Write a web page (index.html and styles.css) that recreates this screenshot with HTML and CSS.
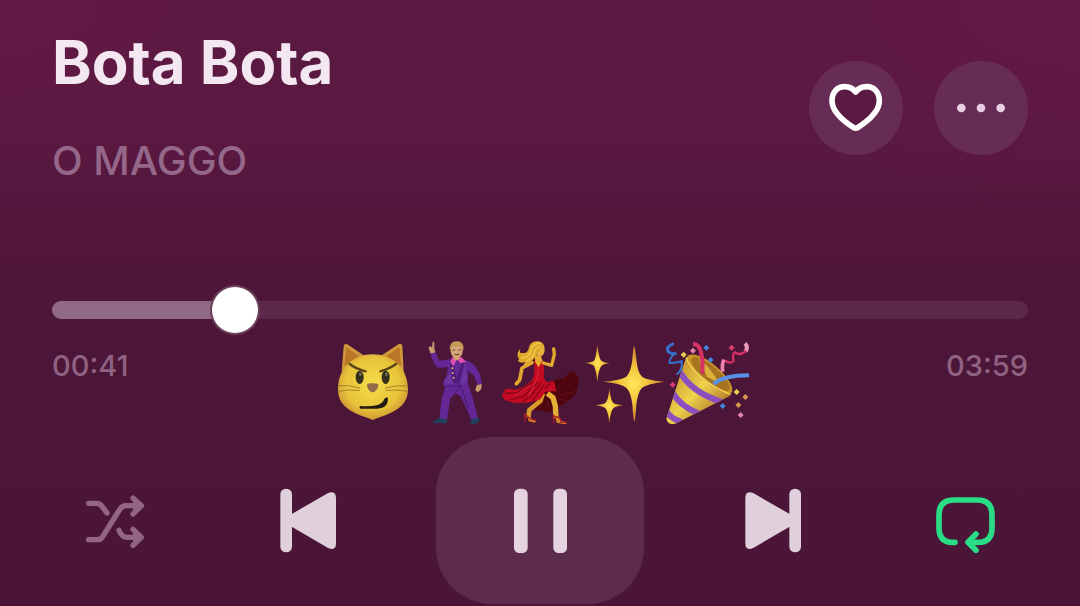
FILE: index.html
```html
<!DOCTYPE html>
<html lang="en">
<head>
  <meta charset="UTF-8">
  <meta name="viewport" content="width=device-width, initial-scale=1">
  <title>Bota Bota - O MAGGO</title>
  <link rel="stylesheet" href="styles.css">
</head>
<body>
<main class="player">
  <header class="track-header">
    <div class="track-info">
      <h1 class="track-title">Bota Bota</h1>
      <p class="track-artist">O MAGGO</p>
    </div>
    <div class="track-actions">
      <button type="button" class="round-button" aria-label="Like">
        <svg width="60" height="54" viewBox="108 123 180 162">
          <path class="heart" d="M197 156Q184 140 164 140C141 140 126 157 126 182C126 214 156 240 190 262Q197 267 204 262C238 240 268 214 268 182C268 157 253 140 230 140Q210 140 197 156z"/>
        </svg>
      </button>
      <button type="button" class="round-button" aria-label="More">
        <svg width="60" height="54" viewBox="482 123 180 162" fill="#e8cfe4">
          <circle cx="513" cy="204" r="13"/>
          <circle cx="572" cy="204" r="13"/>
          <circle cx="631" cy="204" r="13"/>
        </svg>
      </button>
    </div>
  </header>

  <input type="range" class="seek" id="seek" min="0" max="239" value="41" aria-label="Seek" style="--played: 0.1715">

  <div class="time-row">
    <span class="time">00:41</span>

    <div class="emojis">
      <!-- smirking cat -->
      <svg class="emoji" viewBox="0 27 252 264" role="img" aria-label="Smirking cat">
        <defs>
          <radialGradient id="catFace" cx="50%" cy="45%" r="60%">
            <stop offset="0" stop-color="#f5dc48"/>
            <stop offset="0.65" stop-color="#e8c43a"/>
            <stop offset="1" stop-color="#c98a34"/>
          </radialGradient>
        </defs>
        <path fill="#d0983a" d="M35 125L41 49Q43 38 54 44L104 78zM221 125L217 48Q214 37 203 44L152 78z"/>
        <path fill="#b97626" d="M43 108L49 52L92 82zM213 108L208 52L164 82z"/>
        <path fill="url(#catFace)" d="M128 73C73 73 24 110 24 180C24 219 53 241 90 256Q111 263 128 270Q145 263 166 256C205 241 234 219 234 180C234 110 184 73 128 73z"/>
        <g fill="none" stroke="#a5842c" stroke-width="3" stroke-linecap="round">
          <path d="M26 167Q55 164 90 174M25 184Q55 177 89 181M166 174Q200 164 231 168M167 181Q200 177 232 184"/>
        </g>
        <ellipse cx="89" cy="142" rx="12" ry="20" fill="#342f1c"/>
        <ellipse cx="167" cy="142" rx="12" ry="20" fill="#342f1c"/>
        <ellipse cx="91" cy="133" rx="4" ry="6" fill="#716e58"/>
        <ellipse cx="169" cy="133" rx="4" ry="6" fill="#716e58"/>
        <path fill="none" stroke="#594515" stroke-width="7" stroke-linecap="round" d="M59 102Q76 116 107 124M198 102Q180 116 151 124"/>
        <path fill="#946b4c" d="M111 167Q110 160 122 160H132Q146 160 145 167C144 178 133 187 128 187S112 178 111 167z"/>
        <path fill="#241a10" d="M90 228Q121 230 140 226Q159 220 163 207Q168 201 173 202Q177 235 142 236H91Q86 232 90 228z"/>
      </svg>

      <!-- man dancing -->
      <svg class="emoji" viewBox="252 27 252 264" role="img" aria-label="Man dancing">
        <path fill="#c79a6e" d="M301 70L296 55L299 48L306 52L308 36Q311 32 313 37V56L316 65L313 73z"/>
        <path fill="#632796" d="M301 72L316 67L328 93L361 87L380 92L402 89Q422 93 435 107L451 136L456 163L443 166L432 137L415 122L414 163L424 190L445 268L426 272L392 199L376 190L360 207L351 271L327 270L335 204L345 176L339 158L350 137L354 112L322 113Q310 100 301 72z"/>
        <path fill="#4d1c7b" d="M365 93L380 145L398 91L407 96L389 162L364 156L354 108z"/>
        <path fill="#6d34a0" d="M356 94L369 158L352 165L342 156L354 132zM406 94L412 155L389 162L400 116z"/>
        <path fill="none" stroke="#451b70" stroke-width="3" d="M376 190L391 164L416 238M345 169L391 167M414 118V157M354 111V135"/>
        <path fill="#df4fb0" d="M366 82H395L408 96L392 100L381 88L370 109L361 97z"/>
        <path fill="#ce9e70" d="M370 80H390L385 91H374z"/>
        <ellipse cx="380" cy="62" rx="18" ry="23" fill="#d5a477"/>
        <path fill="#c39b56" d="M360 63Q356 34 380 34Q404 34 400 63L394 49Q379 52 366 49z"/>
        <path fill="none" stroke="#5b3526" stroke-width="3" stroke-linecap="round" d="M370 60H374M387 60H391M375 73Q381 77 387 73"/>
        <g fill="#e1b56a">
          <circle cx="367" cy="115" r="3"/>
          <circle cx="368" cy="129" r="3"/>
          <circle cx="371" cy="143" r="3"/>
        </g>
        <path fill="#c79a6e" d="M440 166L455 162L454 177L444 187L436 181z"/>
        <path fill="#243f5d" d="M328 264L352 268L350 280H308Q307 275 328 264zM424 269L445 262L449 274L438 281L422 282z"/>
      </svg>

      <!-- woman dancing -->
      <svg class="emoji" viewBox="54 27 252 264" role="img" aria-label="Woman dancing">
        <path fill="#4d050e" d="M192 177L222 151L253 144L269 123L284 127L295 143L296 160L288 190L268 211L240 228L213 246L187 244L164 240L160 213z"/>
        <path fill="none" stroke="#71101a" stroke-width="2" d="M221 188L270 126M229 191L291 147M232 196L289 184M232 207L266 213M190 210L176 243M203 208L205 244"/>
        <path fill="none" stroke="#d89a28" stroke-width="14" stroke-linejoin="round" d="M189 190L181 213L148 240L145 263"/>
        <path fill="none" stroke="#e5ae36" stroke-width="16" stroke-linejoin="round" d="M202 190L219 203L226 228L228 264"/>
        <path fill="#c40b22" d="M163 91L173 94L187 91L193 114L191 140L198 157L222 153L229 184L196 185L181 208L164 214L134 219L105 219L74 210L65 196L78 176L108 179L135 169L157 150L163 129z"/>
        <path fill="none" stroke="#850717" stroke-width="4" d="M160 156L111 188L73 190M171 158L133 198L92 209M182 159L154 197L126 217M192 164L175 189L156 215M211 159L194 176"/>
        <path fill="none" stroke="#e23a43" stroke-width="2" d="M151 165L104 198M176 118L168 153L145 200"/>
        <path fill="none" stroke="#e3a82e" stroke-width="11" stroke-linecap="round" stroke-linejoin="round" d="M156 98L126 114L119 150L109 161"/>
        <path fill="none" stroke="#e3a82e" stroke-width="10" stroke-linecap="round" stroke-linejoin="round" d="M190 99L215 106L223 73L221 57"/>
        <path fill="#e7ad31" d="M164 79L182 76L187 91L176 112L166 97z"/>
        <ellipse cx="180" cy="60" rx="14" ry="19" fill="#e5b13c"/>
        <path fill="#dfaa2c" d="M194 50Q187 32 168 34Q149 35 145 59Q140 73 120 68Q118 62 121 57Q109 67 114 82Q120 89 113 93Q124 101 136 96L129 108Q148 105 156 92Q164 82 174 79L168 72Q182 65 180 53z"/>
        <path fill="none" stroke="#f0c953" stroke-width="4" d="M181 40Q158 38 153 62Q148 83 123 84M182 50Q164 52 163 70Q157 87 139 93"/>
        <path fill="#d58b25" d="M144 254L153 265L169 272L164 278L145 273zM225 256L238 264L244 272L261 278L256 283L230 278z"/>
        <path fill="none" stroke="#b01c27" stroke-width="4" d="M134 250L135 276M135 253L151 267L168 272M220 254L222 280M221 258L240 264L243 277H261"/>
      </svg>

      <!-- sparkles -->
      <svg class="emoji" viewBox="-9 27 252 264" role="img" aria-label="Sparkles">
        <defs>
          <radialGradient id="spark">
            <stop offset="0" stop-color="#ffe75a"/>
            <stop offset="0.45" stop-color="#f4c43c"/>
            <stop offset="1" stop-color="#c5772e"/>
          </radialGradient>
        </defs>
        <g fill="url(#spark)">
          <path d="M147 48Q150 48 154 88Q158 130 171 140Q187 151 239 155Q187 161 171 173Q158 187 154 224Q151 272 148 275Q145 272 142 224Q138 187 124 173Q108 160 53 155Q108 151 124 140Q138 127 142 88Q145 48 147 48z"/>
          <path d="M37 44Q42 87 49 92Q55 97 75 99Q55 102 49 108Q41 117 37 156Q33 117 27 108Q22 102 1 99Q22 96 27 92Q33 86 37 44z"/>
          <path d="M73 177Q78 214 85 219Q91 223 115 226Q91 229 85 235Q77 242 73 280Q69 242 61 235Q55 229 30 226Q55 223 61 219Q69 213 73 177z"/>
        </g>
      </svg>

      <!-- party popper -->
      <svg class="emoji" viewBox="243 27 252 264" role="img" aria-label="Party popper">
        <defs>
          <linearGradient id="cone" x1="0" y1="0" x2="1" y2="1">
            <stop offset="0.15" stop-color="#c6952c"/>
            <stop offset="0.5" stop-color="#eed24c"/>
            <stop offset="0.85" stop-color="#a96e25"/>
          </linearGradient>
          <clipPath id="coneShape">
            <path d="M303 82C310 112 360 164 436 197L271 281Q248 287 244 266z"/>
          </clipPath>
        </defs>
        <ellipse cx="373" cy="134" rx="86" ry="32" transform="rotate(40 373 134)" fill="#c99528"/>
        <ellipse cx="377" cy="132" rx="73" ry="23" transform="rotate(40 377 132)" fill="#a77420"/>
        <path fill="#d9b13a" d="M340 85Q370 105 402 158L366 140z"/>
        <path fill="url(#cone)" d="M303 82C310 112 360 164 436 197L271 281Q248 287 244 266z"/>
        <g clip-path="url(#coneShape)" fill="none" stroke="#8c4fc0" stroke-width="18">
          <path d="M283 123Q318 187 413 217M262 187Q286 230 344 252M241 238Q254 265 290 276"/>
        </g>
        <path fill="none" stroke="#f3d75a" stroke-width="4" d="M304 82C310 110 360 162 437 194"/>
        <path fill="none" stroke="#d63263" stroke-width="12" d="M324 42Q343 42 348 67Q355 93 352 132"/>
        <path fill="none" stroke="#5691e7" stroke-width="12" d="M386 162Q417 136 492 136"/>
        <g fill="none" stroke="#3972ce" stroke-linecap="round">
          <path stroke-width="9" d="M263 42Q241 52 250 65Q262 73 271 71"/>
          <path stroke-width="6" d="M271 71Q256 78 253 98Q263 102 290 94Q294 118 277 132"/>
        </g>
        <path fill="none" stroke="#ee9dba" stroke-width="12" d="M480 40Q490 50 482 65"/>
        <path fill="none" stroke="#d82f68" stroke-width="7" d="M484 62Q465 79 450 67Q441 72 446 93Q435 103 417 91"/>
        <path fill="none" stroke="#ed84a9" stroke-width="11" d="M417 89Q410 101 413 125"/>
        <g fill="#e5d34e"><path d="M296 65l9 9-9 9-9-9zM455 177l9 9-9 9-9-9z"/></g>
        <g fill="#4286dc"><path d="M364 44l9 9-9 9-9-9zM377 81l9 9-9 9-9-9zM413 219l9 9-9 9-9-9z"/></g>
        <g fill="#d94072"><path d="M440 44l9 9-9 9-9-9zM263 155l9 9-9 9-9-9z"/></g>
        <g fill="#df85ad"><path d="M324 53l9 9-9 9-9-9zM467 246l9 9-9 9-9-9z"/></g>
        <g fill="#d6964b"><path d="M481 192l9 9-9 9-9-9zM460 216l9 9-9 9-9-9z"/></g>
      </svg>
    </div>

    <span class="time time-total">03:59</span>
  </div>

  <div class="controls">
    <button type="button" class="side-button" aria-label="Shuffle">
      <svg width="60" height="54" viewBox="75 70 180 162" fill="none" stroke="#936584" stroke-width="16" stroke-linecap="round" stroke-linejoin="round">
        <path d="M86 98h24q10 0 16 9l15 20"/>
        <path d="M86 207h26q10 0 16-9L180 115q7-10 18-10h36M219 82l25 23-25 25"/>
        <path d="M177 179q8 21 25 21h32M219 176l25 24-25 24"/>
        <path fill="#936584" stroke="none" d="M219 82l25 23-25 25zM219 176l25 24-25 24z"/>
      </svg>
    </button>
    <button type="button" class="skip-button" aria-label="Previous">
      <svg width="60" height="65" viewBox="651 55 180 195" fill="#dfd0db">
        <rect x="661" y="57" width="35" height="191" rx="17"/>
        <path d="M690 136L803 71Q828 60 828 86V220Q828 246 803 234L690 168z"/>
      </svg>
    </button>
    <button type="button" class="pause-button" aria-label="Pause">
      <svg width="54" height="66" viewBox="279 204 162 198" fill="#e5d4e0">
        <rect x="282" y="206" width="41" height="193" rx="16"/>
        <rect x="400" y="206" width="41" height="193" rx="16"/>
      </svg>
    </button>
    <button type="button" class="skip-button" aria-label="Next">
      <svg width="60" height="65" viewBox="68 55 180 195" fill="#dfd0db">
        <rect x="207" y="57" width="35" height="191" rx="17"/>
        <path d="M213 136L100 71Q75 60 75 86V220Q75 246 100 234L213 168z"/>
      </svg>
    </button>
    <button type="button" class="side-button" aria-label="Repeat">
      <svg width="60" height="70" viewBox="645 47 180 210" fill="none" stroke="#2bdc86" stroke-width="17" stroke-linecap="round" stroke-linejoin="round">
        <path d="M705 216h-6Q657 216 657 172V134Q657 89 702 89H772Q816 89 816 134V172Q816 216 774 216H747"/>
        <path d="M768 191L744 216L768 240"/>
      </svg>
    </button>
  </div>
</main>

<script>
  const seek = document.getElementById('seek');

  // keep the played part of the bar under the thumb
  seek.addEventListener('input', function() {
    seek.style.setProperty('--played', seek.value / seek.max);
  });
</script>
</body>
</html>
```
FILE: styles.css
```css
body {
  margin: 0;
  min-height: 100vh;
  font-family: Inter, "Liberation Sans", sans-serif;
  background:
    radial-gradient(ellipse at 0 0, rgba(112, 24, 76, 0.4), transparent 20%),
    radial-gradient(ellipse at 100% 0, rgba(112, 24, 76, 0.4), transparent 25%),
    linear-gradient(#5a1941 0%, #5a1941 22%, #52163b 38%, #4c1638 60%, #4b1537 100%);
}

button {
  display: flex;
  align-items: center;
  justify-content: center;
  padding: 0;
  border: none;
  background: none;
  cursor: pointer;
}

.player {
  padding: 26px 52px 2px;
}

.track-header {
  display: flex;
  align-items: center;
  justify-content: space-between;
}

.track-title {
  margin: 0;
  font-size: 60px;
  line-height: 72px;
  font-weight: 700;
  color: #f3e8f1;
}

.track-artist {
  margin: 34px 0 0;
  font-size: 40px;
  line-height: 58px;
  font-weight: 500;
  color: #956789;
}

.track-actions {
  display: flex;
  gap: 31px;
}

.round-button {
  width: 94px;
  height: 94px;
  border-radius: 50%;
  background-color: #672c55;
}

.heart {
  fill: #5b1a43;
  stroke: #ffffff;
  stroke-width: 17;
  stroke-linejoin: round;
}

/* seek bar */
.seek {
  display: block;
  width: 100%;
  height: 46px;
  margin: 97px 0 0;
  appearance: none;
  background: none;
  cursor: pointer;
}

.seek::-webkit-slider-runnable-track {
  height: 18px;
  border-radius: 9px;
  background: linear-gradient(to right, #906a84 calc(23px + var(--played) * (100% - 46px)), #5d294b 0);
}

.seek::-webkit-slider-thumb {
  appearance: none;
  width: 46px;
  height: 46px;
  margin-top: -14px;
  border-radius: 50%;
  background-color: #ffffff;
  box-shadow: 0 0 0 2px #6b4059;
}

.time-row {
  display: grid;
  grid-template-columns: 1fr auto 1fr;
  margin-top: 6px;
}

.time {
  font-size: 29px;
  line-height: 54px;
  font-weight: 500;
  color: #8f6282;
}

.time-total {
  text-align: right;
}

.emojis {
  display: flex;
}

.emoji {
  width: 84px;
  height: 88px;
}

.controls {
  display: flex;
  justify-content: space-between;
  margin-top: 10px;
}

.side-button {
  width: 126px;
}

.skip-button {
  width: 100px;
}

.pause-button {
  width: 208px;
  height: 167px;
  border-radius: 56px;
  background-color: #5d2b4b;
}
```
